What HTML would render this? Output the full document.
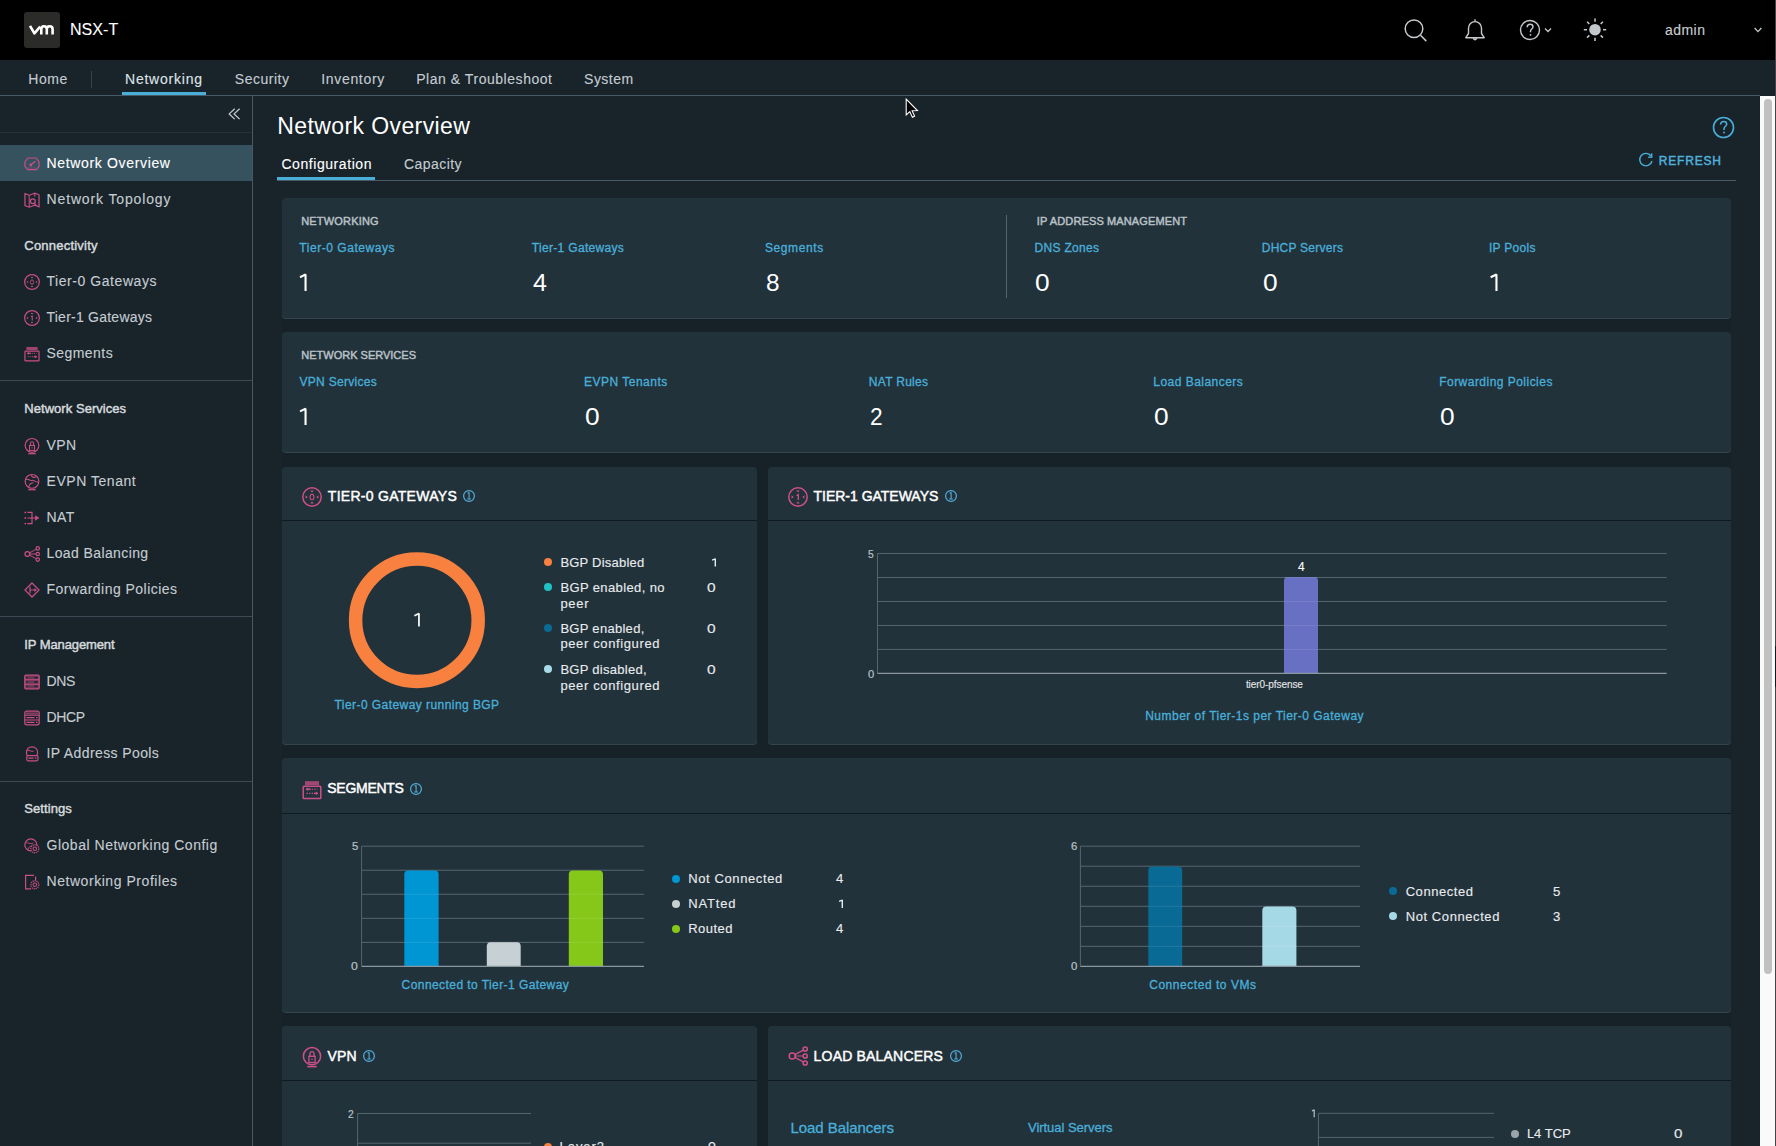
<!DOCTYPE html>
<html><head><meta charset="utf-8"><style>
html,body{margin:0;padding:0;width:1776px;height:1146px;overflow:hidden;background:#18232a;}
body{position:relative;font-family:"Liberation Sans",sans-serif;}
.t{position:absolute;white-space:nowrap;font-family:"Liberation Sans",sans-serif;}
svg{overflow:visible}
</style></head><body>
<div style="position:absolute;left:0px;top:0px;width:1776px;height:60px;background:#000000"></div>
<div style="position:absolute;left:24px;top:12px;width:36px;height:36px;background:#2b2b29;border-radius:3px"></div>
<svg style="position:absolute;left:0;top:0" width="1" height="1"><path d="M30 25.8 L34.4 33.4 L40.2 26.6 M41.3 34.6 L41.3 29.2 Q41.3 26.3 44 26.3 Q46.8 26.3 46.8 29.2 L46.8 34.6 M46.8 29.2 Q46.8 26.3 49.6 26.3 Q52.6 26.3 52.6 29.2 L52.6 34.6" fill="none" stroke="#ffffff" stroke-width="2.6" stroke-linejoin="round"/></svg>
<div class="t" style="left:69.90px;top:22.00px;font-size:16px;line-height:16px;letter-spacing:0.100px;color:#ffffff;-webkit-text-stroke:0.12px #ffffff;">NSX-T</div>
<div class="t" style="left:1664.90px;top:23.00px;font-size:14px;line-height:14px;letter-spacing:0.487px;color:#c9cdd0;-webkit-text-stroke:0.12px #c9cdd0;">admin</div>
<svg style="position:absolute;left:1400px;top:14px" width="32" height="32" viewBox="1400 14 32 32">
<circle cx="1414" cy="28.8" r="8.8" fill="none" stroke="#c6c9cc" stroke-width="1.5"/>
<line x1="1420.5" y1="35.3" x2="1426.3" y2="41.1" stroke="#c6c9cc" stroke-width="1.5"/>
</svg>
<svg style="position:absolute;left:1460px;top:14px" width="30" height="32" viewBox="1460 14 30 32">
<path d="M1465.8 37.7 L1484.2 37.7 L1481.5 33.5 L1481.5 28.2 C1481.5 24.2 1478.6 21.6 1475 21.6 C1471.4 21.6 1468.5 24.2 1468.5 28.2 L1468.5 33.5 Z M1475 19.2 L1475 21.6 M1473.3 38.4 Q1475 41.2 1476.7 38.4" fill="none" stroke="#c6c9cc" stroke-width="1.4" stroke-linejoin="round"/>
</svg>
<svg style="position:absolute;left:1515px;top:14px" width="40" height="32" viewBox="1515 14 40 32">
<circle cx="1530" cy="30" r="9.5" fill="none" stroke="#c6c9cc" stroke-width="1.4"/>
<path d="M1527.2 27.3 C1527.2 25.3 1528.5 24.3 1530.2 24.3 C1531.9 24.3 1533 25.4 1533 26.9 C1533 28.8 1530.5 29 1530.5 31.5 L1530.5 32.3" fill="none" stroke="#c6c9cc" stroke-width="1.4"/>
<circle cx="1530.5" cy="34.8" r="0.9" fill="#c6c9cc"/>
<path d="M1545 28.5 L1548 31.5 L1551 28.5" fill="none" stroke="#c6c9cc" stroke-width="1.3"/>
</svg>
<svg style="position:absolute;left:1580px;top:14px" width="30" height="32" viewBox="1580 14 30 32">
<circle cx="1595" cy="29.7" r="5.8" fill="#c2c7cb"/><line x1="1603.00" y1="29.70" x2="1606.20" y2="29.70" stroke="#c6c9cc" stroke-width="1.5"/><line x1="1600.66" y1="35.36" x2="1602.92" y2="37.62" stroke="#c6c9cc" stroke-width="1.5"/><line x1="1595.00" y1="37.70" x2="1595.00" y2="40.90" stroke="#c6c9cc" stroke-width="1.5"/><line x1="1589.34" y1="35.36" x2="1587.08" y2="37.62" stroke="#c6c9cc" stroke-width="1.5"/><line x1="1587.00" y1="29.70" x2="1583.80" y2="29.70" stroke="#c6c9cc" stroke-width="1.5"/><line x1="1589.34" y1="24.04" x2="1587.08" y2="21.78" stroke="#c6c9cc" stroke-width="1.5"/><line x1="1595.00" y1="21.70" x2="1595.00" y2="18.50" stroke="#c6c9cc" stroke-width="1.5"/><line x1="1600.66" y1="24.04" x2="1602.92" y2="21.78" stroke="#c6c9cc" stroke-width="1.5"/>
</svg>
<svg style="position:absolute;left:1750px;top:24px" width="16" height="12" viewBox="1750 24 16 12">
<path d="M1754.6 28 L1758 31.6 L1761.4 28" fill="none" stroke="#c6c9cc" stroke-width="1.3"/>
</svg>
<div style="position:absolute;left:0px;top:60px;width:1776px;height:35px;background:#18232a"></div>
<div style="position:absolute;left:0px;top:95px;width:1760px;height:1px;background:#495a67"></div>
<div class="t" style="left:28.30px;top:72.20px;font-size:14px;line-height:14px;letter-spacing:0.540px;color:#c5ccd1;-webkit-text-stroke:0.12px #c5ccd1;">Home</div>
<div style="position:absolute;left:91px;top:71px;width:1px;height:17px;background:#34434d"></div>
<div class="t" style="left:125.00px;top:72.20px;font-size:14px;line-height:14px;letter-spacing:0.778px;color:#dfe4e7;-webkit-text-stroke:0.12px #dfe4e7;">Networking</div>
<div style="position:absolute;left:122px;top:92px;width:84px;height:3px;background:#49afd9"></div>
<div class="t" style="left:234.80px;top:72.20px;font-size:14px;line-height:14px;letter-spacing:0.509px;color:#c5ccd1;-webkit-text-stroke:0.12px #c5ccd1;">Security</div>
<div class="t" style="left:321.25px;top:72.20px;font-size:14px;line-height:14px;letter-spacing:0.674px;color:#c5ccd1;-webkit-text-stroke:0.12px #c5ccd1;">Inventory</div>
<div class="t" style="left:416.20px;top:72.20px;font-size:14px;line-height:14px;letter-spacing:0.541px;color:#c5ccd1;-webkit-text-stroke:0.12px #c5ccd1;">Plan &amp; Troubleshoot</div>
<div class="t" style="left:584.10px;top:72.20px;font-size:14px;line-height:14px;letter-spacing:0.462px;color:#c5ccd1;-webkit-text-stroke:0.12px #c5ccd1;">System</div>
<div style="position:absolute;left:0px;top:96px;width:252px;height:1050px;background:#18232a"></div>
<div style="position:absolute;left:252px;top:96px;width:1px;height:1050px;background:#495a67"></div>
<div style="position:absolute;left:0px;top:132px;width:252px;height:1px;background:#233139"></div>
<svg style="position:absolute;left:224px;top:104px" width="20" height="20" viewBox="224 104 20 20">
<path d="M234.7 108.7 L229.2 113.9 L234.7 119.1 M239.6 108.7 L234.1 113.9 L239.6 119.1" fill="none" stroke="#c3cacf" stroke-width="1.3"/>
</svg>
<div style="position:absolute;left:0px;top:145px;width:252px;height:36px;background:#36525f"></div>
<div class="t" style="left:46.50px;top:156.00px;font-size:14px;line-height:14px;letter-spacing:0.659px;color:#ffffff;-webkit-text-stroke:0.12px #ffffff;">Network Overview</div>
<div class="t" style="left:46.50px;top:192.00px;font-size:14px;line-height:14px;letter-spacing:0.865px;color:#c5ccd1;-webkit-text-stroke:0.12px #c5ccd1;">Network Topology</div>
<div class="t" style="left:46.50px;top:273.80px;font-size:14px;line-height:14px;letter-spacing:0.557px;color:#c5ccd1;-webkit-text-stroke:0.12px #c5ccd1;">Tier-0 Gateways</div>
<div class="t" style="left:46.50px;top:309.60px;font-size:14px;line-height:14px;letter-spacing:0.236px;color:#c5ccd1;-webkit-text-stroke:0.12px #c5ccd1;">Tier-1 Gateways</div>
<div class="t" style="left:46.50px;top:345.70px;font-size:14px;line-height:14px;letter-spacing:0.447px;color:#c5ccd1;-webkit-text-stroke:0.12px #c5ccd1;">Segments</div>
<div class="t" style="left:46.50px;top:437.60px;font-size:14px;line-height:14px;letter-spacing:0.365px;color:#c5ccd1;-webkit-text-stroke:0.12px #c5ccd1;">VPN</div>
<div class="t" style="left:46.50px;top:474.00px;font-size:14px;line-height:14px;letter-spacing:0.541px;color:#c5ccd1;-webkit-text-stroke:0.12px #c5ccd1;">EVPN Tenant</div>
<div class="t" style="left:46.50px;top:509.70px;font-size:14px;line-height:14px;letter-spacing:0.475px;color:#c5ccd1;-webkit-text-stroke:0.12px #c5ccd1;">NAT</div>
<div class="t" style="left:46.50px;top:546.00px;font-size:14px;line-height:14px;letter-spacing:0.390px;color:#c5ccd1;-webkit-text-stroke:0.12px #c5ccd1;">Load Balancing</div>
<div class="t" style="left:46.50px;top:581.80px;font-size:14px;line-height:14px;letter-spacing:0.464px;color:#c5ccd1;-webkit-text-stroke:0.12px #c5ccd1;">Forwarding Policies</div>
<div class="t" style="left:46.50px;top:673.70px;font-size:14px;line-height:14px;letter-spacing:-0.370px;color:#c5ccd1;-webkit-text-stroke:0.12px #c5ccd1;">DNS</div>
<div class="t" style="left:46.50px;top:709.50px;font-size:14px;line-height:14px;letter-spacing:-0.397px;color:#c5ccd1;-webkit-text-stroke:0.12px #c5ccd1;">DHCP</div>
<div class="t" style="left:46.50px;top:745.80px;font-size:14px;line-height:14px;letter-spacing:0.398px;color:#c5ccd1;-webkit-text-stroke:0.12px #c5ccd1;">IP Address Pools</div>
<div class="t" style="left:46.50px;top:837.70px;font-size:14px;line-height:14px;letter-spacing:0.523px;color:#c5ccd1;-webkit-text-stroke:0.12px #c5ccd1;">Global Networking Config</div>
<div class="t" style="left:46.50px;top:873.60px;font-size:14px;line-height:14px;letter-spacing:0.549px;color:#c5ccd1;-webkit-text-stroke:0.12px #c5ccd1;">Networking Profiles</div>
<div class="t" style="left:24.30px;top:238.50px;font-size:13px;line-height:13px;letter-spacing:0.220px;color:#d5dadd;-webkit-text-stroke:0.45px #d5dadd;">Connectivity</div>
<div class="t" style="left:24.30px;top:402.30px;font-size:13px;line-height:13px;letter-spacing:0.044px;color:#d5dadd;-webkit-text-stroke:0.45px #d5dadd;">Network Services</div>
<div class="t" style="left:24.30px;top:638.00px;font-size:13px;line-height:13px;letter-spacing:-0.102px;color:#d5dadd;-webkit-text-stroke:0.45px #d5dadd;">IP Management</div>
<div class="t" style="left:24.30px;top:802.00px;font-size:13px;line-height:13px;letter-spacing:0.086px;color:#d5dadd;-webkit-text-stroke:0.45px #d5dadd;">Settings</div>
<div style="position:absolute;left:0px;top:380px;width:252px;height:1px;background:#3b4a54"></div>
<div style="position:absolute;left:0px;top:616px;width:252px;height:1px;background:#3b4a54"></div>
<div style="position:absolute;left:0px;top:781px;width:252px;height:1px;background:#3b4a54"></div>
<svg style="position:absolute;left:24px;top:156.20px" width="16" height="16" viewBox="0 0 20 20"><path d="M4.5 17 L1.2 13 L1.2 7.5 L5 2.5 L15 2.5 L18.8 7.5 L18.8 13 L15.5 17 Z" fill="none" stroke="#c94f86" stroke-width="1.5"/><path d="M8 11.5 L14 6.5" stroke="#c94f86" stroke-width="1.6"/><circle cx="8.5" cy="11.2" r="1.8" fill="#c94f86"/><path d="M5 15 L15 15" stroke="#c94f86" stroke-width="1" stroke-dasharray="1 1"/></svg>
<svg style="position:absolute;left:24px;top:192.20px" width="16" height="16" viewBox="0 0 20 20"><path d="M1.2 2 L6.5 4 L13.5 1.5 L18.8 3.5 L18.8 18.5 L13.5 16.5 L6.5 19 L1.2 17 Z" fill="none" stroke="#c94f86" stroke-width="1.5"/><path d="M6.5 4 L6.5 19 M13.5 1.5 L13.5 6" stroke="#c94f86" stroke-width="1.3"/><circle cx="11" cy="11.5" r="3" fill="none" stroke="#c94f86" stroke-width="1.5"/><path d="M13 14 L15 16.5" stroke="#c94f86" stroke-width="1.5"/></svg>
<svg style="position:absolute;left:24px;top:274.00px" width="16" height="16" viewBox="0 0 20 20"><circle cx="10" cy="10" r="9.2" fill="none" stroke="#c94f86" stroke-width="1.5"/><rect x="8.1" y="7.4" width="3.8" height="5.4" rx="1.9" fill="none" stroke="#c94f86" stroke-width="1.1"/><path d="M8.3 3.6 L11.7 3.6 L10 5.6 Z M8.3 16.4 L11.7 16.4 L10 14.4 Z M3.6 8.3 L3.6 11.7 L5.6 10 Z M16.4 8.3 L16.4 11.7 L14.4 10 Z" fill="#c94f86"/></svg>
<svg style="position:absolute;left:24px;top:309.80px" width="16" height="16" viewBox="0 0 20 20"><circle cx="10" cy="10" r="9.2" fill="none" stroke="#c94f86" stroke-width="1.5"/><path d="M8.6 8.6 L10.3 7.6 L10.3 13" fill="none" stroke="#c94f86" stroke-width="1.3"/><path d="M8.3 3.6 L11.7 3.6 L10 5.6 Z M8.3 16.4 L11.7 16.4 L10 14.4 Z M3.6 8.3 L3.6 11.7 L5.6 10 Z M16.4 8.3 L16.4 11.7 L14.4 10 Z" fill="#c94f86"/></svg>
<svg style="position:absolute;left:24px;top:345.90px" width="16" height="16" viewBox="0 0 20 20"><rect x="1.2" y="6.3" width="17.6" height="12.2" rx="0.8" fill="none" stroke="#c94f86" stroke-width="1.5"/><rect x="3" y="1.2" width="14" height="3.8" fill="#c94f86" opacity="0.75"/><path d="M4.5 9.2 L15.5 9.2 M4.5 13.4 L15.5 13.4" stroke="#c94f86" stroke-width="1.1" stroke-dasharray="1.4 1.2"/><path d="M4 9.2 L8.5 9.2 M12 13.4 L16 13.4" stroke="#c94f86" stroke-width="1.3"/><path d="M6.2 7.4 L3.8 9.2 L6.2 11 Z M13.8 11.6 L16.2 13.4 L13.8 15.2 Z" fill="#c94f86"/></svg>
<svg style="position:absolute;left:24px;top:437.80px" width="16" height="16" viewBox="0 0 20 20"><circle cx="10" cy="9.2" r="8.6" fill="none" stroke="#c94f86" stroke-width="1.5"/><rect x="6.9" y="9.3" width="6.2" height="6.2" fill="none" stroke="#c94f86" stroke-width="1.3"/><path d="M8 9.3 L8 6.6 A2 2 0 0 1 12 6.6 L12 9.3" fill="none" stroke="#c94f86" stroke-width="1.3"/><rect x="9.3" y="11.6" width="1.4" height="1.4" fill="#c94f86"/><path d="M5.3 19.6 L14.7 19.6" stroke="#c94f86" stroke-width="1.6"/></svg>
<svg style="position:absolute;left:24px;top:474.20px" width="16" height="16" viewBox="0 0 20 20"><circle cx="10" cy="9.2" r="8.6" fill="none" stroke="#c94f86" stroke-width="1.5"/><path d="M2.5 7 C5 5 7 9 10 8 C13 7 14 11 17.5 10 M6 16 C7 12 9 11 12 11 M9 1.5 C10 4 12 5 15 3.5" fill="none" stroke="#c94f86" stroke-width="1.3"/><path d="M5.3 19.6 L14.7 19.6" stroke="#c94f86" stroke-width="1.6"/></svg>
<svg style="position:absolute;left:24px;top:509.90px" width="16" height="16" viewBox="0 0 20 20"><circle cx="1.6" cy="3" r="1.1" fill="#c94f86"/><circle cx="1.6" cy="10" r="1.1" fill="#c94f86"/><circle cx="1.6" cy="17" r="1.1" fill="#c94f86"/><path d="M4.2 3 L10 3 L10 17 L4.2 17 M4.2 10 L15 10" fill="none" stroke="#c94f86" stroke-width="1.5"/><path d="M14 6.6 L19.2 10 L14 13.4 Z" fill="#c94f86"/></svg>
<svg style="position:absolute;left:24px;top:546.20px" width="16" height="16" viewBox="0 0 20 20"><circle cx="4.2" cy="10" r="3" fill="none" stroke="#c94f86" stroke-width="1.5"/><circle cx="17.2" cy="3" r="2.1" fill="none" stroke="#c94f86" stroke-width="1.5"/><circle cx="17.2" cy="10" r="2.1" fill="none" stroke="#c94f86" stroke-width="1.5"/><circle cx="17.2" cy="17" r="2.1" fill="none" stroke="#c94f86" stroke-width="1.5"/><path d="M7.2 10 L15 10 M6.8 8.6 L15.3 4.1 M6.8 11.4 L15.3 15.9" stroke="#c94f86" stroke-width="1.2"/></svg>
<svg style="position:absolute;left:24px;top:582.00px" width="16" height="16" viewBox="0 0 20 20"><path d="M10 1.2 L18.8 10 L10 18.8 L1.2 10 Z" fill="none" stroke="#c94f86" stroke-width="1.5"/><path d="M7.5 6 L7.5 14 M7.5 10 L15 10" stroke="#c94f86" stroke-width="1.5"/><path d="M13 7.5 L16 10 L13 12.5 Z" fill="#c94f86"/></svg>
<svg style="position:absolute;left:24px;top:673.90px" width="16" height="16" viewBox="0 0 20 20"><rect x="1" y="1.5" width="18" height="17" rx="1.2" fill="#c94f86" fill-opacity="0.45" stroke="#c94f86" stroke-width="1.5"/><path d="M1 7.2 L19 7.2 M1 12.8 L19 12.8" stroke="#c94f86" stroke-width="1.2"/><path d="M3 4.4 L4.6 4.4 M3 10 L4.6 10 M3 15.6 L4.6 15.6 M13 4.4 L17 4.4 M13 10 L17 10 M13 15.6 L17 15.6" stroke="#18232a" stroke-width="1.6"/></svg>
<svg style="position:absolute;left:24px;top:709.70px" width="16" height="16" viewBox="0 0 20 20"><rect x="1" y="1.5" width="18" height="17" rx="2.5" fill="none" stroke="#c94f86" stroke-width="1.5"/><rect x="2.5" y="3" width="15" height="2.6" fill="#c94f86" opacity="0.6"/><path d="M1 6.5 L19 6.5 M1 12.5 L19 12.5" stroke="#c94f86" stroke-width="1.3"/><path d="M3 9.5 L13 9.5 M3 15.5 L13 15.5" stroke="#c94f86" stroke-width="1.6"/><path d="M15 9.5 L17 9.5 M15 15.5 L17 15.5" stroke="#c94f86" stroke-width="1.6"/></svg>
<svg style="position:absolute;left:24px;top:746.00px" width="16" height="16" viewBox="0 0 20 20"><circle cx="10" cy="8" r="7" fill="none" stroke="#c94f86" stroke-width="1.5"/><path d="M4 6 C7 4 9 8 12 6.5" fill="none" stroke="#c94f86" stroke-width="1.2"/><rect x="3.5" y="12" width="14" height="6.5" rx="1.8" fill="#18232a" stroke="#c94f86" stroke-width="1.5"/><path d="M5.5 15.2 L12 15.2 M13.5 15.2 L15.5 15.2" stroke="#c94f86" stroke-width="1.4"/></svg>
<svg style="position:absolute;left:24px;top:837.90px" width="16" height="16" viewBox="0 0 20 20"><circle cx="8.5" cy="8.5" r="7.5" fill="none" stroke="#c94f86" stroke-width="1.5"/><path d="M2.5 6.5 C5 4.5 8 9 11.5 6 M5 14 C6 11 8 10 10 10" fill="none" stroke="#c94f86" stroke-width="1.2"/><circle cx="13.5" cy="13.5" r="5" fill="#18232a" stroke="#c94f86" stroke-width="1.5" stroke-dasharray="1.6 0.9"/><circle cx="13.5" cy="13.5" r="2.2" fill="none" stroke="#c94f86" stroke-width="1.3"/></svg>
<svg style="position:absolute;left:24px;top:873.80px" width="16" height="16" viewBox="0 0 20 20"><path d="M12.5 1.8 L2 1.8 L2 18.5 L9 18.5 M14.5 8 L14.5 3" fill="none" stroke="#c94f86" stroke-width="1.5"/><circle cx="13.5" cy="13.5" r="5" fill="#18232a" stroke="#c94f86" stroke-width="1.5" stroke-dasharray="1.6 0.9"/><circle cx="13.5" cy="13.5" r="2.2" fill="none" stroke="#c94f86" stroke-width="1.3"/></svg>
<div style="position:absolute;left:253px;top:96px;width:1507px;height:1050px;background:#18232a"></div>
<div class="t" style="left:277.20px;top:115.00px;font-size:23px;line-height:23px;letter-spacing:0.410px;color:#ffffff;">Network Overview</div>
<div class="t" style="left:281.40px;top:157.20px;font-size:14px;line-height:14px;letter-spacing:0.567px;color:#ffffff;-webkit-text-stroke:0.12px #ffffff;">Configuration</div>
<div class="t" style="left:404.00px;top:157.20px;font-size:14px;line-height:14px;letter-spacing:0.449px;color:#c5ccd1;-webkit-text-stroke:0.12px #c5ccd1;">Capacity</div>
<div style="position:absolute;left:277px;top:180px;width:1459px;height:1px;background:#495a67"></div>
<div style="position:absolute;left:277px;top:177px;width:98px;height:3px;background:#49afd9"></div>
<svg style="position:absolute;left:1710px;top:114px" width="28" height="28" viewBox="1710 114 28 28">
<circle cx="1723.5" cy="127.5" r="10" fill="none" stroke="#49afd9" stroke-width="1.6"/>
<path d="M1720.6 124.6 C1720.6 122.5 1722 121.5 1723.8 121.5 C1725.6 121.5 1726.7 122.7 1726.7 124.2 C1726.7 126.3 1724 126.4 1724 129 L1724 130" fill="none" stroke="#49afd9" stroke-width="1.5"/>
<circle cx="1724" cy="132.6" r="1" fill="#49afd9"/>
</svg>
<svg style="position:absolute;left:1636px;top:150px" width="20" height="20" viewBox="1636 150 20 20">
<path d="M1651 156 A6.2 6.2 0 1 0 1652 161" fill="none" stroke="#49afd9" stroke-width="1.4"/>
<path d="M1648.2 157.2 L1651.8 157 L1651.6 153.4" fill="none" stroke="#49afd9" stroke-width="1.4"/>
</svg>
<div class="t" style="left:1658.80px;top:154.90px;font-size:12px;line-height:12px;letter-spacing:0.807px;color:#52b1dc;-webkit-text-stroke:0.45px #52b1dc;">REFRESH</div>
<div style="position:absolute;left:282px;top:198px;width:1449px;height:948px;background:#162128"></div>
<div style="position:absolute;left:282px;top:198px;width:1449px;height:120px;background:#22323b;border-radius:4px;box-shadow:0 1px 0 0 #33444d"></div>
<div style="position:absolute;left:282px;top:332px;width:1449px;height:120px;background:#22323b;border-radius:4px;box-shadow:0 1px 0 0 #33444d"></div>
<div style="position:absolute;left:282px;top:467px;width:475px;height:277px;background:#22323b;border-radius:4px;box-shadow:0 1px 0 0 #33444d"></div>
<div style="position:absolute;left:282px;top:520px;width:475px;height:1px;background:#0f1a20"></div>
<div style="position:absolute;left:768px;top:467px;width:963px;height:277px;background:#22323b;border-radius:4px;box-shadow:0 1px 0 0 #33444d"></div>
<div style="position:absolute;left:768px;top:520px;width:963px;height:1px;background:#0f1a20"></div>
<div style="position:absolute;left:282px;top:758px;width:1449px;height:254px;background:#22323b;border-radius:4px;box-shadow:0 1px 0 0 #33444d"></div>
<div style="position:absolute;left:282px;top:813px;width:1449px;height:1px;background:#0f1a20"></div>
<div style="position:absolute;left:282px;top:1026px;width:475px;height:200px;background:#22323b;border-radius:4px;box-shadow:0 1px 0 0 #33444d"></div>
<div style="position:absolute;left:282px;top:1080px;width:475px;height:1px;background:#0f1a20"></div>
<div style="position:absolute;left:768px;top:1026px;width:963px;height:200px;background:#22323b;border-radius:4px;box-shadow:0 1px 0 0 #33444d"></div>
<div style="position:absolute;left:768px;top:1080px;width:963px;height:1px;background:#0f1a20"></div>
<div class="t" style="left:301.20px;top:216.00px;font-size:11px;line-height:11px;letter-spacing:0.190px;color:#b9c1c6;-webkit-text-stroke:0.45px #b9c1c6;">NETWORKING</div>
<div class="t" style="left:1036.80px;top:216.20px;font-size:11px;line-height:11px;letter-spacing:0.124px;color:#b9c1c6;-webkit-text-stroke:0.45px #b9c1c6;">IP ADDRESS MANAGEMENT</div>
<div style="position:absolute;left:1006px;top:215px;width:1px;height:83px;background:#56646e"></div>
<div class="t" style="left:301.30px;top:350.10px;font-size:11px;line-height:11px;letter-spacing:-0.002px;color:#b9c1c6;-webkit-text-stroke:0.45px #b9c1c6;">NETWORK SERVICES</div>
<div class="t" style="left:299.30px;top:241.70px;font-size:12px;line-height:12px;letter-spacing:0.543px;color:#49afd9;-webkit-text-stroke:0.12px #49afd9;-webkit-text-stroke:0.3px #49afd9;">Tier-0 Gateways</div>
<svg style="position:absolute;left:0;top:0" width="1" height="1" viewBox="0 0 1 1"><path d="M300.04 277.22 L305.55 274.43 L305.55 290.90" fill="none" stroke="#ffffff" stroke-width="2.1" stroke-linejoin="bevel"/></svg>
<div class="t" style="left:531.80px;top:241.70px;font-size:12px;line-height:12px;letter-spacing:0.321px;color:#49afd9;-webkit-text-stroke:0.12px #49afd9;-webkit-text-stroke:0.3px #49afd9;">Tier-1 Gateways</div>
<div class="t" style="left:532.70px;top:270.90px;font-size:24px;line-height:24px;letter-spacing:0.000px;color:#ffffff;transform:scaleX(1.044);transform-origin:0 0;">4</div>
<div class="t" style="left:764.90px;top:241.70px;font-size:12px;line-height:12px;letter-spacing:0.606px;color:#49afd9;-webkit-text-stroke:0.12px #49afd9;-webkit-text-stroke:0.3px #49afd9;">Segments</div>
<div class="t" style="left:766.20px;top:270.90px;font-size:24px;line-height:24px;letter-spacing:0.000px;color:#ffffff;transform:scaleX(1.014);transform-origin:0 0;">8</div>
<div class="t" style="left:1034.50px;top:241.70px;font-size:12px;line-height:12px;letter-spacing:0.308px;color:#49afd9;-webkit-text-stroke:0.12px #49afd9;-webkit-text-stroke:0.3px #49afd9;">DNS Zones</div>
<div class="t" style="left:1035.40px;top:270.90px;font-size:24px;line-height:24px;letter-spacing:0.000px;color:#ffffff;transform:scaleX(1.096);transform-origin:0 0;">0</div>
<div class="t" style="left:1261.80px;top:241.70px;font-size:12px;line-height:12px;letter-spacing:0.238px;color:#49afd9;-webkit-text-stroke:0.12px #49afd9;-webkit-text-stroke:0.3px #49afd9;">DHCP Servers</div>
<div class="t" style="left:1262.70px;top:270.90px;font-size:24px;line-height:24px;letter-spacing:0.000px;color:#ffffff;transform:scaleX(1.096);transform-origin:0 0;">0</div>
<div class="t" style="left:1489.00px;top:241.70px;font-size:12px;line-height:12px;letter-spacing:0.291px;color:#49afd9;-webkit-text-stroke:0.12px #49afd9;-webkit-text-stroke:0.3px #49afd9;">IP Pools</div>
<svg style="position:absolute;left:0;top:0" width="1" height="1" viewBox="0 0 1 1"><path d="M1490.63 277.22 L1496.45 274.43 L1496.45 290.90" fill="none" stroke="#ffffff" stroke-width="2.1" stroke-linejoin="bevel"/></svg>
<div class="t" style="left:299.50px;top:376.20px;font-size:12px;line-height:12px;letter-spacing:0.287px;color:#49afd9;-webkit-text-stroke:0.12px #49afd9;-webkit-text-stroke:0.3px #49afd9;">VPN Services</div>
<svg style="position:absolute;left:0;top:0" width="1" height="1" viewBox="0 0 1 1"><path d="M300.04 411.42 L305.55 408.63 L305.55 425.10" fill="none" stroke="#ffffff" stroke-width="2.1" stroke-linejoin="bevel"/></svg>
<div class="t" style="left:583.90px;top:376.20px;font-size:12px;line-height:12px;letter-spacing:0.507px;color:#49afd9;-webkit-text-stroke:0.12px #49afd9;-webkit-text-stroke:0.3px #49afd9;">EVPN Tenants</div>
<div class="t" style="left:584.50px;top:405.10px;font-size:24px;line-height:24px;letter-spacing:0.000px;color:#ffffff;transform:scaleX(1.096);transform-origin:0 0;">0</div>
<div class="t" style="left:868.80px;top:376.20px;font-size:12px;line-height:12px;letter-spacing:0.290px;color:#49afd9;-webkit-text-stroke:0.12px #49afd9;-webkit-text-stroke:0.3px #49afd9;">NAT Rules</div>
<div class="t" style="left:869.70px;top:405.10px;font-size:24px;line-height:24px;letter-spacing:0.000px;color:#ffffff;transform:scaleX(0.946);transform-origin:0 0;">2</div>
<div class="t" style="left:1153.30px;top:376.20px;font-size:12px;line-height:12px;letter-spacing:0.469px;color:#49afd9;-webkit-text-stroke:0.12px #49afd9;-webkit-text-stroke:0.3px #49afd9;">Load Balancers</div>
<div class="t" style="left:1154.10px;top:405.10px;font-size:24px;line-height:24px;letter-spacing:0.000px;color:#ffffff;transform:scaleX(1.096);transform-origin:0 0;">0</div>
<div class="t" style="left:1439.20px;top:376.20px;font-size:12px;line-height:12px;letter-spacing:0.472px;color:#49afd9;-webkit-text-stroke:0.12px #49afd9;-webkit-text-stroke:0.3px #49afd9;">Forwarding Policies</div>
<div class="t" style="left:1439.60px;top:405.10px;font-size:24px;line-height:24px;letter-spacing:0.000px;color:#ffffff;transform:scaleX(1.096);transform-origin:0 0;">0</div>
<svg style="position:absolute;left:302.1px;top:486.7px" width="20" height="20" viewBox="0 0 20 20"><circle cx="10" cy="10" r="9.2" fill="none" stroke="#cf4f8b" stroke-width="1.5"/><rect x="8.1" y="7.4" width="3.8" height="5.4" rx="1.9" fill="none" stroke="#cf4f8b" stroke-width="1.1"/><path d="M8.3 3.6 L11.7 3.6 L10 5.6 Z M8.3 16.4 L11.7 16.4 L10 14.4 Z M3.6 8.3 L3.6 11.7 L5.6 10 Z M16.4 8.3 L16.4 11.7 L14.4 10 Z" fill="#cf4f8b"/></svg>
<div class="t" style="left:327.80px;top:488.90px;font-size:14px;line-height:14px;letter-spacing:0.282px;color:#ffffff;-webkit-text-stroke:0.45px #ffffff;">TIER-0 GATEWAYS</div>
<svg style="position:absolute;left:462px;top:489px" width="14" height="14" viewBox="462 489 14 14">
<circle cx="469" cy="496" r="5.4" fill="none" stroke="#55addb" stroke-width="1.2"/>
<path d="M467.6 492.9 L469.1 492.9 L469.1 498.9 M467.2 499.0 L470.9 499.0" fill="none" stroke="#55addb" stroke-width="1.1"/>
</svg>
<svg style="position:absolute;left:788.1px;top:486.7px" width="20" height="20" viewBox="0 0 20 20"><circle cx="10" cy="10" r="9.2" fill="none" stroke="#cf4f8b" stroke-width="1.5"/><path d="M8.6 8.6 L10.3 7.6 L10.3 13" fill="none" stroke="#cf4f8b" stroke-width="1.3"/><path d="M8.3 3.6 L11.7 3.6 L10 5.6 Z M8.3 16.4 L11.7 16.4 L10 14.4 Z M3.6 8.3 L3.6 11.7 L5.6 10 Z M16.4 8.3 L16.4 11.7 L14.4 10 Z" fill="#cf4f8b"/></svg>
<div class="t" style="left:813.50px;top:488.90px;font-size:14px;line-height:14px;letter-spacing:-0.011px;color:#ffffff;-webkit-text-stroke:0.45px #ffffff;">TIER-1 GATEWAYS</div>
<svg style="position:absolute;left:943.5px;top:489px" width="14" height="14" viewBox="943.5 489 14 14">
<circle cx="950.5" cy="496" r="5.4" fill="none" stroke="#55addb" stroke-width="1.2"/>
<path d="M949.1 492.9 L950.6 492.9 L950.6 498.9 M948.7 499.0 L952.4 499.0" fill="none" stroke="#55addb" stroke-width="1.1"/>
</svg>
<svg style="position:absolute;left:302.1px;top:779.8px" width="20" height="20" viewBox="0 0 20 20"><rect x="1.2" y="6.3" width="17.6" height="12.2" rx="0.8" fill="none" stroke="#cf4f8b" stroke-width="1.5"/><rect x="3" y="1.2" width="14" height="3.8" fill="#cf4f8b" opacity="0.75"/><path d="M4.5 9.2 L15.5 9.2 M4.5 13.4 L15.5 13.4" stroke="#cf4f8b" stroke-width="1.1" stroke-dasharray="1.4 1.2"/><path d="M4 9.2 L8.5 9.2 M12 13.4 L16 13.4" stroke="#cf4f8b" stroke-width="1.3"/><path d="M6.2 7.4 L3.8 9.2 L6.2 11 Z M13.8 11.6 L16.2 13.4 L13.8 15.2 Z" fill="#cf4f8b"/></svg>
<div class="t" style="left:327.30px;top:780.90px;font-size:14px;line-height:14px;letter-spacing:-0.277px;color:#ffffff;-webkit-text-stroke:0.45px #ffffff;">SEGMENTS</div>
<svg style="position:absolute;left:409px;top:782px" width="14" height="14" viewBox="409 782 14 14">
<circle cx="416" cy="789" r="5.4" fill="none" stroke="#55addb" stroke-width="1.2"/>
<path d="M414.6 785.9 L416.1 785.9 L416.1 791.9 M414.2 792.0 L417.9 792.0" fill="none" stroke="#55addb" stroke-width="1.1"/>
</svg>
<svg style="position:absolute;left:302.1px;top:1046.5px" width="20" height="20" viewBox="0 0 20 20"><circle cx="10" cy="9.2" r="8.6" fill="none" stroke="#cf4f8b" stroke-width="1.5"/><rect x="6.9" y="9.3" width="6.2" height="6.2" fill="none" stroke="#cf4f8b" stroke-width="1.3"/><path d="M8 9.3 L8 6.6 A2 2 0 0 1 12 6.6 L12 9.3" fill="none" stroke="#cf4f8b" stroke-width="1.3"/><rect x="9.3" y="11.6" width="1.4" height="1.4" fill="#cf4f8b"/><path d="M5.3 19.6 L14.7 19.6" stroke="#cf4f8b" stroke-width="1.6"/></svg>
<div class="t" style="left:327.40px;top:1049.00px;font-size:14px;line-height:14px;letter-spacing:0.215px;color:#ffffff;-webkit-text-stroke:0.45px #ffffff;">VPN</div>
<svg style="position:absolute;left:362px;top:1049px" width="14" height="14" viewBox="362 1049 14 14">
<circle cx="369" cy="1056" r="5.4" fill="none" stroke="#55addb" stroke-width="1.2"/>
<path d="M367.6 1052.9 L369.1 1052.9 L369.1 1058.9 M367.2 1059.0 L370.9 1059.0" fill="none" stroke="#55addb" stroke-width="1.1"/>
</svg>
<svg style="position:absolute;left:787.8px;top:1046.2px" width="20" height="20" viewBox="0 0 20 20"><circle cx="4.2" cy="10" r="3" fill="none" stroke="#cf4f8b" stroke-width="1.5"/><circle cx="17.2" cy="3" r="2.1" fill="none" stroke="#cf4f8b" stroke-width="1.5"/><circle cx="17.2" cy="10" r="2.1" fill="none" stroke="#cf4f8b" stroke-width="1.5"/><circle cx="17.2" cy="17" r="2.1" fill="none" stroke="#cf4f8b" stroke-width="1.5"/><path d="M7.2 10 L15 10 M6.8 8.6 L15.3 4.1 M6.8 11.4 L15.3 15.9" stroke="#cf4f8b" stroke-width="1.2"/></svg>
<div class="t" style="left:813.60px;top:1049.00px;font-size:14px;line-height:14px;letter-spacing:0.189px;color:#ffffff;-webkit-text-stroke:0.45px #ffffff;">LOAD BALANCERS</div>
<svg style="position:absolute;left:949px;top:1049px" width="14" height="14" viewBox="949 1049 14 14">
<circle cx="956" cy="1056" r="5.4" fill="none" stroke="#55addb" stroke-width="1.2"/>
<path d="M954.6 1052.9 L956.1 1052.9 L956.1 1058.9 M954.2 1059.0 L957.9 1059.0" fill="none" stroke="#55addb" stroke-width="1.1"/>
</svg>
<svg style="position:absolute;left:340px;top:544px" width="154" height="154" viewBox="340 544 154 154">
<circle cx="416.9" cy="620.2" r="61.3" fill="none" stroke="#f8813f" stroke-width="13.5"/>
</svg>
<svg style="position:absolute;left:0;top:0" width="1" height="1" viewBox="0 0 1 1"><path d="M414.40 615.68 L418.95 613.51 L418.95 626.40" fill="none" stroke="#ffffff" stroke-width="1.7" stroke-linejoin="bevel"/></svg>
<div class="t" style="left:334.50px;top:698.90px;font-size:12px;line-height:12px;letter-spacing:0.440px;color:#49afd9;-webkit-text-stroke:0.12px #49afd9;-webkit-text-stroke:0.3px #49afd9;">Tier-0 Gateway running BGP</div>
<div style="position:absolute;left:543.8px;top:557.9px;width:8px;height:8px;background:#f8813f;border-radius:50%"></div>
<div style="position:absolute;left:543.8px;top:583.2px;width:8px;height:8px;background:#1fc2c9;border-radius:50%"></div>
<div style="position:absolute;left:543.8px;top:623.8px;width:8px;height:8px;background:#0a6b94;border-radius:50%"></div>
<div style="position:absolute;left:543.8px;top:664.7px;width:8px;height:8px;background:#a6dbe8;border-radius:50%"></div>
<div class="t" style="left:560.40px;top:555.60px;font-size:13px;line-height:13px;letter-spacing:0.223px;color:#e9ecee;-webkit-text-stroke:0.12px #e9ecee;">BGP Disabled</div>
<div class="t" style="left:560.40px;top:580.60px;font-size:13px;line-height:13px;letter-spacing:0.379px;color:#e9ecee;-webkit-text-stroke:0.12px #e9ecee;">BGP enabled, no</div>
<div class="t" style="left:560.40px;top:596.50px;font-size:13px;line-height:13px;letter-spacing:0.700px;color:#e9ecee;-webkit-text-stroke:0.12px #e9ecee;">peer</div>
<div class="t" style="left:560.40px;top:621.90px;font-size:13px;line-height:13px;letter-spacing:0.288px;color:#e9ecee;-webkit-text-stroke:0.12px #e9ecee;">BGP enabled,</div>
<div class="t" style="left:560.40px;top:637.40px;font-size:13px;line-height:13px;letter-spacing:0.625px;color:#e9ecee;-webkit-text-stroke:0.12px #e9ecee;">peer configured</div>
<div class="t" style="left:560.40px;top:662.50px;font-size:13px;line-height:13px;letter-spacing:0.269px;color:#e9ecee;-webkit-text-stroke:0.12px #e9ecee;">BGP disabled,</div>
<div class="t" style="left:560.40px;top:678.70px;font-size:13px;line-height:13px;letter-spacing:0.625px;color:#e9ecee;-webkit-text-stroke:0.12px #e9ecee;">peer configured</div>
<svg style="position:absolute;left:0;top:0" width="1" height="1" viewBox="0 0 1 1"><path d="M712.09 560.04 L715.30 558.82 L715.30 566.60" fill="none" stroke="#e9ecee" stroke-width="1.4" stroke-linejoin="bevel"/></svg>
<div class="t" style="left:707.40px;top:580.60px;font-size:13px;line-height:13px;letter-spacing:0.000px;color:#e9ecee;-webkit-text-stroke:0.12px #e9ecee;transform:scaleX(1.192);transform-origin:0 0;">0</div>
<div class="t" style="left:707.40px;top:621.90px;font-size:13px;line-height:13px;letter-spacing:0.000px;color:#e9ecee;-webkit-text-stroke:0.12px #e9ecee;transform:scaleX(1.192);transform-origin:0 0;">0</div>
<div class="t" style="left:707.40px;top:662.50px;font-size:13px;line-height:13px;letter-spacing:0.000px;color:#e9ecee;-webkit-text-stroke:0.12px #e9ecee;transform:scaleX(1.192);transform-origin:0 0;">0</div>
<svg style="position:absolute;left:0;top:0" width="1776" height="1146" viewBox="0 0 1776 1146"><line x1="877.5" y1="553.5" x2="1666.7" y2="553.5" stroke="#56666f" stroke-width="1"/><line x1="877.5" y1="577.48" x2="1666.7" y2="577.48" stroke="#56666f" stroke-width="1"/><line x1="877.5" y1="601.46" x2="1666.7" y2="601.46" stroke="#56666f" stroke-width="1"/><line x1="877.5" y1="625.44" x2="1666.7" y2="625.44" stroke="#56666f" stroke-width="1"/><line x1="877.5" y1="649.42" x2="1666.7" y2="649.42" stroke="#56666f" stroke-width="1"/><line x1="877.5" y1="553.5" x2="877.5" y2="673.4" stroke="#56666f" stroke-width="1"/><path d="M1284 673.4 L1284 581 Q1284 577 1288 577 L1314 577 Q1318 577 1318 581 L1318 673.4 Z" fill="#6870c4"/><line x1="1284" y1="577.48" x2="1318" y2="577.48" stroke="#ffffff" stroke-opacity="0.10" stroke-width="1"/><line x1="1284" y1="601.46" x2="1318" y2="601.46" stroke="#ffffff" stroke-opacity="0.10" stroke-width="1"/><line x1="1284" y1="625.44" x2="1318" y2="625.44" stroke="#ffffff" stroke-opacity="0.10" stroke-width="1"/><line x1="1284" y1="649.42" x2="1318" y2="649.42" stroke="#ffffff" stroke-opacity="0.10" stroke-width="1"/><line x1="877.5" y1="673.4" x2="1666.7" y2="673.4" stroke="#8a979e" stroke-width="1.2"/></svg>
<div class="t" style="left:868.00px;top:549.50px;font-size:10px;line-height:10px;letter-spacing:0.000px;color:#b8c0c5;-webkit-text-stroke:0.12px #b8c0c5;transform:scaleX(1.027);transform-origin:0 0;-webkit-text-stroke:0.2px #b8c0c5;">5</div>
<div class="t" style="left:867.50px;top:669.50px;font-size:10px;line-height:10px;letter-spacing:0.000px;color:#b8c0c5;-webkit-text-stroke:0.12px #b8c0c5;transform:scaleX(1.117);transform-origin:0 0;-webkit-text-stroke:0.2px #b8c0c5;">0</div>
<div class="t" style="left:1297.70px;top:560.90px;font-size:12px;line-height:12px;letter-spacing:0.000px;color:#ffffff;-webkit-text-stroke:0.12px #ffffff;transform:scaleX(0.991);transform-origin:0 0;">4</div>
<div class="t" style="left:1245.90px;top:680.10px;font-size:10px;line-height:10px;letter-spacing:-0.067px;color:#e2e6e8;-webkit-text-stroke:0.12px #e2e6e8;">tier0-pfsense</div>
<div class="t" style="left:1145.20px;top:710.30px;font-size:12px;line-height:12px;letter-spacing:0.485px;color:#49afd9;-webkit-text-stroke:0.12px #49afd9;-webkit-text-stroke:0.3px #49afd9;">Number of Tier-1s per Tier-0 Gateway</div>
<svg style="position:absolute;left:0;top:0" width="1776" height="1146" viewBox="0 0 1776 1146"><line x1="361.6" y1="846.2" x2="644.1" y2="846.2" stroke="#56666f" stroke-width="1"/><line x1="361.6" y1="870.24" x2="644.1" y2="870.24" stroke="#56666f" stroke-width="1"/><line x1="361.6" y1="894.28" x2="644.1" y2="894.28" stroke="#56666f" stroke-width="1"/><line x1="361.6" y1="918.3199999999999" x2="644.1" y2="918.3199999999999" stroke="#56666f" stroke-width="1"/><line x1="361.6" y1="942.36" x2="644.1" y2="942.36" stroke="#56666f" stroke-width="1"/><line x1="361.6" y1="846.2" x2="361.6" y2="966.4" stroke="#56666f" stroke-width="1"/><path d="M404.3 966.4 L404.3 874.5 Q404.3 870.5 408.3 870.5 L434.6 870.5 Q438.6 870.5 438.6 874.5 L438.6 966.4 Z" fill="#0095d3"/><path d="M486.8 966.4 L486.8 946.3 Q486.8 942.3 490.8 942.3 L516.7 942.3 Q520.7 942.3 520.7 946.3 L520.7 966.4 Z" fill="#c7d0d5"/><path d="M568.8 966.4 L568.8 874.5 Q568.8 870.5 572.8 870.5 L599 870.5 Q603 870.5 603 874.5 L603 966.4 Z" fill="#85c81a"/><line x1="404.3" y1="894.28" x2="438.6" y2="894.28" stroke="#ffffff" stroke-opacity="0.10" stroke-width="1"/><line x1="568.8" y1="894.28" x2="603" y2="894.28" stroke="#ffffff" stroke-opacity="0.10" stroke-width="1"/><line x1="404.3" y1="918.3199999999999" x2="438.6" y2="918.3199999999999" stroke="#ffffff" stroke-opacity="0.10" stroke-width="1"/><line x1="568.8" y1="918.3199999999999" x2="603" y2="918.3199999999999" stroke="#ffffff" stroke-opacity="0.10" stroke-width="1"/><line x1="404.3" y1="942.36" x2="438.6" y2="942.36" stroke="#ffffff" stroke-opacity="0.10" stroke-width="1"/><line x1="486.8" y1="942.36" x2="520.7" y2="942.36" stroke="#ffffff" stroke-opacity="0.10" stroke-width="1"/><line x1="568.8" y1="942.36" x2="603" y2="942.36" stroke="#ffffff" stroke-opacity="0.10" stroke-width="1"/><line x1="361.6" y1="966.4" x2="644.1" y2="966.4" stroke="#8a979e" stroke-width="1.2"/></svg>
<div class="t" style="left:351.70px;top:842.20px;font-size:10px;line-height:10px;letter-spacing:0.000px;color:#b8c0c5;-webkit-text-stroke:0.12px #b8c0c5;transform:scaleX(1.135);transform-origin:0 0;-webkit-text-stroke:0.2px #b8c0c5;">5</div>
<div class="t" style="left:351.20px;top:962.40px;font-size:10px;line-height:10px;letter-spacing:0.000px;color:#b8c0c5;-webkit-text-stroke:0.12px #b8c0c5;transform:scaleX(1.225);transform-origin:0 0;-webkit-text-stroke:0.2px #b8c0c5;">0</div>
<div class="t" style="left:401.60px;top:978.90px;font-size:12px;line-height:12px;letter-spacing:0.428px;color:#49afd9;-webkit-text-stroke:0.12px #49afd9;-webkit-text-stroke:0.3px #49afd9;">Connected to Tier-1 Gateway</div>
<div style="position:absolute;left:672px;top:874.9px;width:8px;height:8px;background:#0095d3;border-radius:50%"></div>
<div style="position:absolute;left:672px;top:899.9px;width:8px;height:8px;background:#c7d0d5;border-radius:50%"></div>
<div style="position:absolute;left:672px;top:924.9px;width:8px;height:8px;background:#85c81a;border-radius:50%"></div>
<div class="t" style="left:688.20px;top:872.10px;font-size:13px;line-height:13px;letter-spacing:0.607px;color:#e9ecee;-webkit-text-stroke:0.12px #e9ecee;">Not Connected</div>
<div class="t" style="left:688.20px;top:896.90px;font-size:13px;line-height:13px;letter-spacing:0.841px;color:#e9ecee;-webkit-text-stroke:0.12px #e9ecee;">NATted</div>
<div class="t" style="left:688.20px;top:921.60px;font-size:13px;line-height:13px;letter-spacing:0.475px;color:#e9ecee;-webkit-text-stroke:0.12px #e9ecee;">Routed</div>
<div class="t" style="left:835.70px;top:872.10px;font-size:13px;line-height:13px;letter-spacing:0.000px;color:#e9ecee;-webkit-text-stroke:0.12px #e9ecee;transform:scaleX(1.012);transform-origin:0 0;">4</div>
<svg style="position:absolute;left:0;top:0" width="1" height="1" viewBox="0 0 1 1"><path d="M839.09 901.34 L842.30 900.12 L842.30 907.90" fill="none" stroke="#e9ecee" stroke-width="1.4" stroke-linejoin="bevel"/></svg>
<div class="t" style="left:835.70px;top:921.60px;font-size:13px;line-height:13px;letter-spacing:0.000px;color:#e9ecee;-webkit-text-stroke:0.12px #e9ecee;transform:scaleX(1.012);transform-origin:0 0;">4</div>
<svg style="position:absolute;left:0;top:0" width="1776" height="1146" viewBox="0 0 1776 1146"><line x1="1080.4" y1="846.2" x2="1360" y2="846.2" stroke="#56666f" stroke-width="1"/><line x1="1080.4" y1="866.2333333333333" x2="1360" y2="866.2333333333333" stroke="#56666f" stroke-width="1"/><line x1="1080.4" y1="886.2666666666667" x2="1360" y2="886.2666666666667" stroke="#56666f" stroke-width="1"/><line x1="1080.4" y1="906.3" x2="1360" y2="906.3" stroke="#56666f" stroke-width="1"/><line x1="1080.4" y1="926.3333333333334" x2="1360" y2="926.3333333333334" stroke="#56666f" stroke-width="1"/><line x1="1080.4" y1="946.3666666666667" x2="1360" y2="946.3666666666667" stroke="#56666f" stroke-width="1"/><line x1="1080.4" y1="846.2" x2="1080.4" y2="966.4" stroke="#56666f" stroke-width="1"/><path d="M1148.3 966.4 L1148.3 870.4 Q1148.3 866.4 1152.3 866.4 L1178.2 866.4 Q1182.2 866.4 1182.2 870.4 L1182.2 966.4 Z" fill="#0a6a96"/><path d="M1262.3 966.4 L1262.3 910.4 Q1262.3 906.4 1266.3 906.4 L1292.4 906.4 Q1296.4 906.4 1296.4 910.4 L1296.4 966.4 Z" fill="#a6d9e6"/><line x1="1148.3" y1="886.2666666666667" x2="1182.2" y2="886.2666666666667" stroke="#ffffff" stroke-opacity="0.10" stroke-width="1"/><line x1="1148.3" y1="906.3" x2="1182.2" y2="906.3" stroke="#ffffff" stroke-opacity="0.10" stroke-width="1"/><line x1="1148.3" y1="926.3333333333334" x2="1182.2" y2="926.3333333333334" stroke="#ffffff" stroke-opacity="0.10" stroke-width="1"/><line x1="1262.3" y1="926.3333333333334" x2="1296.4" y2="926.3333333333334" stroke="#ffffff" stroke-opacity="0.10" stroke-width="1"/><line x1="1148.3" y1="946.3666666666667" x2="1182.2" y2="946.3666666666667" stroke="#ffffff" stroke-opacity="0.10" stroke-width="1"/><line x1="1262.3" y1="946.3666666666667" x2="1296.4" y2="946.3666666666667" stroke="#ffffff" stroke-opacity="0.10" stroke-width="1"/><line x1="1080.4" y1="966.4" x2="1360" y2="966.4" stroke="#8a979e" stroke-width="1.2"/></svg>
<div class="t" style="left:1070.50px;top:842.20px;font-size:10px;line-height:10px;letter-spacing:0.000px;color:#b8c0c5;-webkit-text-stroke:0.12px #b8c0c5;transform:scaleX(1.135);transform-origin:0 0;-webkit-text-stroke:0.2px #b8c0c5;">6</div>
<div class="t" style="left:1070.50px;top:962.40px;font-size:10px;line-height:10px;letter-spacing:0.000px;color:#b8c0c5;-webkit-text-stroke:0.12px #b8c0c5;transform:scaleX(1.135);transform-origin:0 0;-webkit-text-stroke:0.2px #b8c0c5;">0</div>
<div class="t" style="left:1149.20px;top:978.90px;font-size:12px;line-height:12px;letter-spacing:0.540px;color:#49afd9;-webkit-text-stroke:0.12px #49afd9;-webkit-text-stroke:0.3px #49afd9;">Connected to VMs</div>
<div style="position:absolute;left:1388.7px;top:887.3px;width:8px;height:8px;background:#0a6a96;border-radius:50%"></div>
<div style="position:absolute;left:1388.7px;top:912.1px;width:8px;height:8px;background:#a6d9e6;border-radius:50%"></div>
<div class="t" style="left:1405.70px;top:884.60px;font-size:13px;line-height:13px;letter-spacing:0.543px;color:#e9ecee;-webkit-text-stroke:0.12px #e9ecee;">Connected</div>
<div class="t" style="left:1405.70px;top:909.60px;font-size:13px;line-height:13px;letter-spacing:0.583px;color:#e9ecee;-webkit-text-stroke:0.12px #e9ecee;">Not Connected</div>
<div class="t" style="left:1553.40px;top:884.60px;font-size:13px;line-height:13px;letter-spacing:0.000px;color:#e9ecee;-webkit-text-stroke:0.12px #e9ecee;transform:scaleX(1.012);transform-origin:0 0;">5</div>
<div class="t" style="left:1553.40px;top:909.60px;font-size:13px;line-height:13px;letter-spacing:0.000px;color:#e9ecee;-webkit-text-stroke:0.12px #e9ecee;transform:scaleX(1.012);transform-origin:0 0;">3</div>
<svg style="position:absolute;left:0;top:0" width="1776" height="1146" viewBox="0 0 1776 1146">
<line x1="357.6" y1="1113.5" x2="531" y2="1113.5" stroke="#56666f"/>
<line x1="357.6" y1="1143.2" x2="531" y2="1143.2" stroke="#56666f"/>
<line x1="357.6" y1="1113.5" x2="357.6" y2="1146" stroke="#56666f"/>
<line x1="1318.4" y1="1113.3" x2="1494" y2="1113.3" stroke="#56666f"/>
<line x1="1318.4" y1="1137.4" x2="1494" y2="1137.4" stroke="#56666f"/>
<line x1="1318.4" y1="1113.3" x2="1318.4" y2="1146" stroke="#56666f"/>
</svg>
<div class="t" style="left:348.00px;top:1109.50px;font-size:10px;line-height:10px;letter-spacing:0.000px;color:#b8c0c5;-webkit-text-stroke:0.12px #b8c0c5;transform:scaleX(1.027);transform-origin:0 0;-webkit-text-stroke:0.2px #b8c0c5;">2</div>
<svg style="position:absolute;left:0;top:0" width="1" height="1" viewBox="0 0 1 1"><path d="M1311.92 1111.06 L1314.20 1109.86 L1314.20 1117.30" fill="none" stroke="#b8c0c5" stroke-width="1.2" stroke-linejoin="bevel"/></svg>
<div style="position:absolute;left:543.7px;top:1143px;width:8px;height:8px;background:#f8813f;border-radius:50%"></div>
<div class="t" style="left:559.60px;top:1139.70px;font-size:13px;line-height:13px;letter-spacing:0.924px;color:#e9ecee;-webkit-text-stroke:0.12px #e9ecee;">Layer2</div>
<div class="t" style="left:708.20px;top:1139.70px;font-size:13px;line-height:13px;letter-spacing:0.000px;color:#e9ecee;-webkit-text-stroke:0.12px #e9ecee;transform:scaleX(1.081);transform-origin:0 0;">0</div>
<div class="t" style="left:790.40px;top:1119.50px;font-size:15px;line-height:15px;letter-spacing:-0.050px;color:#49afd9;-webkit-text-stroke:0.12px #49afd9;-webkit-text-stroke:0.3px #49afd9;">Load Balancers</div>
<div class="t" style="left:1028.00px;top:1120.50px;font-size:13px;line-height:13px;letter-spacing:-0.037px;color:#49afd9;-webkit-text-stroke:0.12px #49afd9;-webkit-text-stroke:0.3px #49afd9;">Virtual Servers</div>
<div style="position:absolute;left:1510.7px;top:1129.8px;width:8px;height:8px;background:#9aa5ab;border-radius:50%"></div>
<div class="t" style="left:1526.90px;top:1127.10px;font-size:13px;line-height:13px;letter-spacing:-0.002px;color:#e9ecee;-webkit-text-stroke:0.12px #e9ecee;">L4 TCP</div>
<div class="t" style="left:1673.80px;top:1127.10px;font-size:13px;line-height:13px;letter-spacing:0.000px;color:#e9ecee;-webkit-text-stroke:0.12px #e9ecee;transform:scaleX(1.164);transform-origin:0 0;">0</div>
<div style="position:absolute;left:1760px;top:96px;width:15px;height:1050px;background:#fafafa"></div>
<div style="position:absolute;left:1764px;top:99px;width:8px;height:875px;background:#c1c1c1;border-radius:4px"></div>
<div style="position:absolute;left:1775px;top:0px;width:1px;height:1146px;background:#4d3f48"></div>
<div style="position:absolute;left:1775px;top:646px;width:1px;height:41px;background:#0d1a22"></div>
<svg style="position:absolute;left:904px;top:97px" width="18" height="24" viewBox="904 97 18 24">
<path d="M906.2 99.2 L906.2 115 L909.8 111.6 L912.4 117.2 L914.6 116.2 L912.1 110.8 L917.4 110.6 Z" fill="#000" stroke="#fff" stroke-width="1.1" stroke-linejoin="miter"/>
</svg>
</body></html>
